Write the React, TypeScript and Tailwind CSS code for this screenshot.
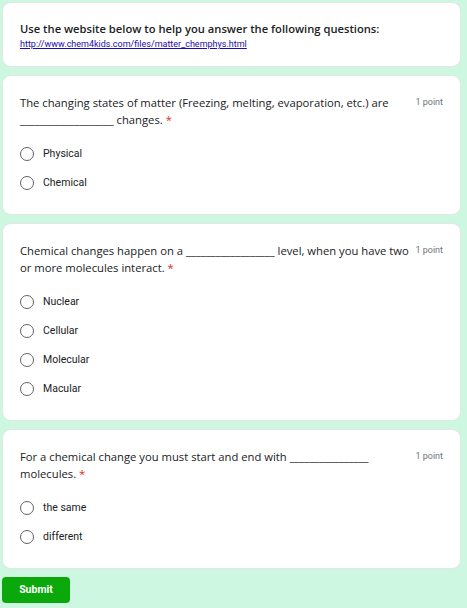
import React from "react";

const sans = { fontFamily: '"Open Sans", Roboto, sans-serif' };

function Radio({ label }: { label: string }) {
  return (
    <div className="flex items-center h-[29px]">
      <span className="w-[14px] h-[14px] rounded-full border-[1.5px] border-[#5f6368] shrink-0" />
      <span className="ml-[9px] text-[10.5px] text-[#202124] font-['Roboto',sans-serif]">{label}</span>
    </div>
  );
}

function Question({ text, options }: { text: string; options: string[] }) {
  return (
    <div className="bg-white rounded-[8px] pl-[17px] pr-[17px] pt-[18px] pb-[17px] shadow-[0_0_0_1px_#e2e8e5]">
      <div className="flex items-start">
        <div className="flex-1 text-[11.25px] leading-[17px] text-[#202124] font-['Open_Sans',sans-serif]">
          {text}
          {"\u00a0"}
          <span className="text-[#d93025]">*</span>
        </div>
        <div className="ml-[6px] shrink-0 text-[9px] leading-[17px] text-[#70757a] font-['Roboto',sans-serif]">1 point</div>
      </div>
      <div className="mt-[11px] flex flex-col">
        {options.map((o) => (
          <Radio key={o} label={o} />
        ))}
      </div>
    </div>
  );
}

export default function App() {
  return (
    <div className="min-h-[608px] w-[467px] bg-[#cdf7e0] pl-[3px] pr-[7px] pt-[3px] pb-[5px]" style={sans}>
      <div className="flex flex-col gap-[10px]">
        <div className="bg-white rounded-[8px] pl-[17px] pr-[17px] pt-[17px] pb-[16px] shadow-[0_0_0_1px_#e2e8e5]">
          <div className="text-[11.2px] leading-[18px] font-semibold text-[#202124] font-['Open_Sans',sans-serif]">
            Use the website below to help you answer the following questions:
          </div>
          <a className="block text-[9px] leading-[12px] text-[#1a0dab] underline font-['Roboto',sans-serif]" href="#">
            http://www.chem4kids.com/files/matter_chemphys.html
          </a>
        </div>
        <Question
          text="The changing states of matter (Freezing, melting, evaporation, etc.) are ___________________ changes."
          options={["Physical", "Chemical"]}
        />
        <Question
          text="Chemical changes happen on a __________________ level, when you have two or more molecules interact."
          options={["Nuclear", "Cellular", "Molecular", "Macular"]}
        />
        <Question
          text="For a chemical change you must start and end with ________________ molecules."
          options={["the same", "different"]}
        />
      </div>
      <button className="mt-[9px] -ml-px w-[68px] h-[26px] rounded-[4px] bg-[#0aa80a] text-white text-[10.5px] font-bold font-['Roboto',sans-serif]">
        Submit
      </button>
    </div>
  );
}
